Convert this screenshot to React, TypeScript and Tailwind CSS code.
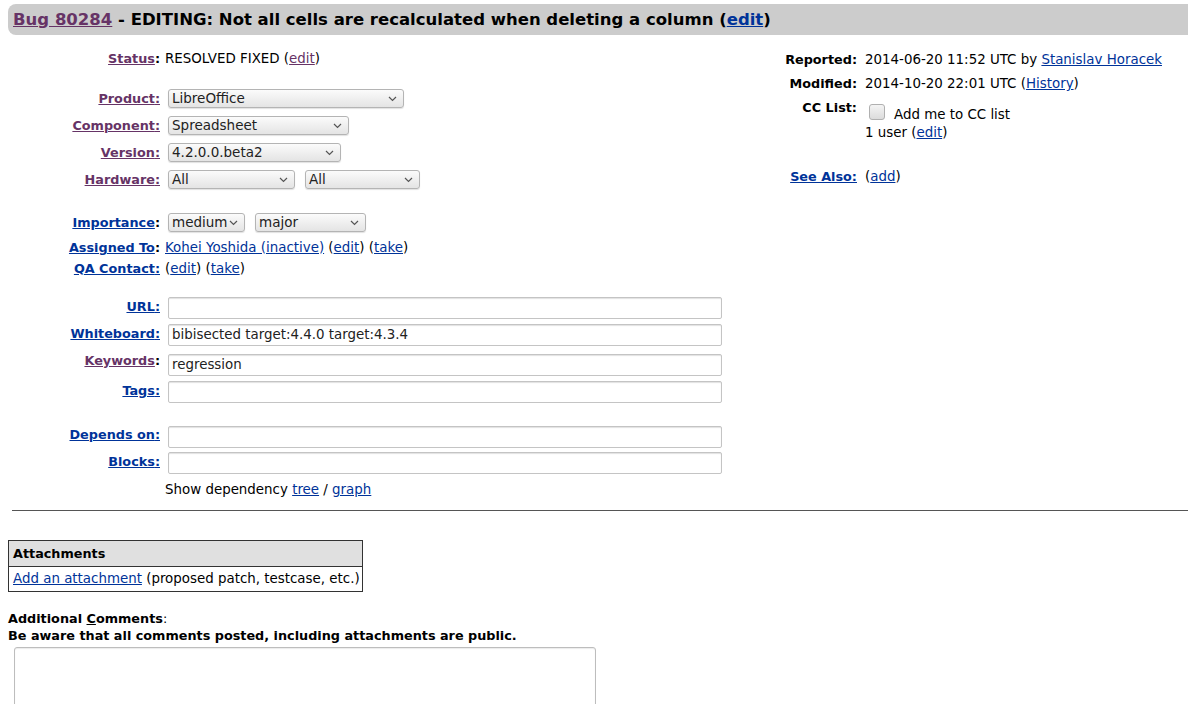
import React from "react";

const BLUE = "text-[#003399]";
const PURPLE = "text-[#663366]";

function Chevron() {
  return (
    <svg width="9" height="6" viewBox="0 0 9 6" className="absolute right-[6px] top-1/2 -translate-y-1/2">
      <path d="M1 1 L4.5 4.5 L8 1" fill="none" stroke="#555" strokeWidth="1.2" />
    </svg>
  );
}

function Select({ width, value, className = "" }: { width: string; value: string; className?: string }) {
  return (
    <div
      className={`relative flex h-[19px] items-center rounded-[3px] border border-[#b4b4b4] bg-gradient-to-b from-[#fbfbfb] to-[#e4e4e4] pl-[3px] text-[13.5px] leading-none text-[#222] shadow-[0_1px_1px_rgba(0,0,0,0.12)] ${width} ${className}`}
    >
      {value}
      <Chevron />
    </div>
  );
}

function TextInput({ value = "", className = "" }: { value?: string; className?: string }) {
  return (
    <div
      className={`ml-[3px] flex h-[22px] w-[554px] items-center rounded-[2px] border border-[#c4c4c4] bg-white pl-[3px] text-[13.4px] text-[#222] shadow-[inset_0_1px_1px_rgba(0,0,0,0.12)] ${className}`}
    >
      {value}
    </div>
  );
}

function Label({ text, color, colonLinked = true }: { text: string; color: string; colonLinked?: boolean }) {
  return (
    <div className="w-[160px] shrink-0 text-right text-[12.8px] font-bold">
      {colonLinked ? (
        <a className={`${color} underline`}>{text}:</a>
      ) : (
        <>
          <a className={`${color} underline`}>{text}</a>:
        </>
      )}
    </div>
  );
}

export default function App() {
  return (
    <div className="min-h-screen overflow-hidden bg-white font-['DejaVu_Sans',Verdana,sans-serif] text-[13.4px] leading-[16px] text-black">
      {/* title bar */}
      <div className="mt-[4px] ml-[8px] -mr-[20px] flex h-[31px] items-center rounded-l-[8px] bg-[#cccccc] pl-[5px] text-[16.5px] font-bold whitespace-nowrap">
        <a className={`${PURPLE} underline`}>Bug 80284</a>
        <span>&nbsp;- EDITING: Not all cells are recalculated when deleting a column (</span>
        <a className={`${BLUE} underline`}>edit</a>
        <span>)</span>
      </div>

      <div className="flex">
        {/* left column */}
        <div className="w-[760px] shrink-0">
          <div className="mt-[16px] flex h-[16px] items-center">
            <Label text="Status" color={PURPLE} colonLinked={false} />
            <div className="pl-[5px]">
              RESOLVED FIXED (<a className={`${PURPLE} underline`}>edit</a>)
            </div>
          </div>

          <div className="mt-[18px] flex h-[27px] items-center">
            <Label text="Product" color={PURPLE} />
            <Select width="w-[236px]" value="LibreOffice" className="ml-[8px]" />
          </div>
          <div className="flex h-[27px] items-center">
            <Label text="Component" color={PURPLE} />
            <Select width="w-[181px]" value="Spreadsheet" className="ml-[8px]" />
          </div>
          <div className="flex h-[27px] items-center">
            <Label text="Version" color={PURPLE} />
            <Select width="w-[173px]" value="4.2.0.0.beta2" className="ml-[8px]" />
          </div>
          <div className="flex h-[27px] items-center">
            <Label text="Hardware" color={PURPLE} />
            <Select width="w-[127px]" value="All" className="ml-[8px]" />
            <Select width="w-[115px]" value="All" className="ml-[10px]" />
          </div>

          <div className="mt-[16px] flex h-[27px] items-center">
            <Label text="Importance" color={BLUE} colonLinked={false} />
            <Select width="w-[77px]" value="medium" className="ml-[8px]" />
            <Select width="w-[111px]" value="major" className="ml-[10px]" />
          </div>
          <div className="mt-[1px] flex h-[21px] items-center">
            <Label text="Assigned To" color={BLUE} colonLinked={false} />
            <div className="pl-[5px]">
              <a className={`${BLUE} underline`}>Kohei Yoshida (inactive)</a> (
              <a className={`${BLUE} underline`}>edit</a>) (<a className={`${BLUE} underline`}>take</a>)
            </div>
          </div>
          <div className="flex h-[21px] items-center">
            <Label text="QA Contact" color={BLUE} />
            <div className="pl-[5px]">
              (<a className={`${BLUE} underline`}>edit</a>) (<a className={`${BLUE} underline`}>take</a>)
            </div>
          </div>

          <div className="mt-[18px] flex h-[27px] items-start">
            <div className="pt-[2px]">
              <Label text="URL" color={BLUE} />
            </div>
            <TextInput className="ml-[8px]" />
          </div>
          <div className="flex h-[27px] items-start">
            <div className="pt-[2px]">
              <Label text="Whiteboard" color={BLUE} />
            </div>
            <TextInput className="ml-[8px]" value="bibisected target:4.4.0 target:4.3.4" />
          </div>
          <div className="flex h-[30px] items-start">
            <div className="pt-[2px]">
              <Label text="Keywords" color={PURPLE} colonLinked={false} />
            </div>
            <TextInput className="mt-[3px] ml-[8px]" value="regression" />
          </div>
          <div className="flex h-[27px] items-start">
            <div className="pt-[2px]">
              <Label text="Tags" color={BLUE} />
            </div>
            <TextInput className="ml-[8px]" />
          </div>

          <div className="mt-[18px] flex h-[26px] items-start">
            <div className="pt-[1px]">
              <Label text="Depends on" color={BLUE} />
            </div>
            <TextInput className="ml-[8px]" />
          </div>
          <div className="flex h-[22px] items-start">
            <div className="pt-[2px]">
              <Label text="Blocks" color={BLUE} />
            </div>
            <TextInput className="ml-[8px]" />
          </div>
          <div className="mt-[8px] flex h-[16px]">
            <div className="w-[160px] shrink-0" />
            <div className="pl-[5px]">
              Show dependency <a className={`${BLUE} underline`}>tree</a> / <a className={`${BLUE} underline`}>graph</a>
            </div>
          </div>
        </div>

        {/* right column */}
        <div className="mt-[13px] flex-1">
          <div className="flex h-[24px] items-center">
            <div className="w-[97px] shrink-0 text-right text-[12.8px] font-bold">Reported:</div>
            <div className="pl-[8px] whitespace-nowrap">
              2014-06-20 11:52 UTC by <a className={`${BLUE} underline`}>Stanislav Horacek</a>
            </div>
          </div>
          <div className="flex h-[24px] items-center">
            <div className="w-[97px] shrink-0 text-right text-[12.8px] font-bold">Modified:</div>
            <div className="pl-[8px] whitespace-nowrap">
              2014-10-20 22:01 UTC (<a className={`${BLUE} underline`}>History</a>)
            </div>
          </div>
          <div className="flex">
            <div className="w-[97px] shrink-0 pt-[4px] text-right text-[12.8px] font-bold">CC List:</div>
            <div className="pl-[8px]">
              <div className="mt-[8px] flex items-start">
                <div className="ml-[4px] h-[16px] w-[16px] rounded-[3px] border border-[#b0b0b0] bg-gradient-to-b from-[#f4f4f4] to-[#dcdcdc]" />
                <div className="mt-[3px] ml-[9px]">Add me to CC list</div>
              </div>
              <div className="mt-[2px]">
                1 user (<a className={`${BLUE} underline`}>edit</a>)
              </div>
            </div>
          </div>
          <div className="mt-[28px] flex h-[16px]">
            <div className="w-[97px] shrink-0 text-right text-[12.8px] font-bold">
              <a className={`${BLUE} underline`}>See Also:</a>
            </div>
            <div className="pl-[8px]">
              (<a className={`${BLUE} underline`}>add</a>)
            </div>
          </div>
        </div>
      </div>

      <div className="mt-[12px] ml-[12px] border-t border-[#555]" />

      <div className="mt-[29px] ml-[8px] w-[355px] border border-[#333]">
        <div className="flex h-[26px] items-center border-b border-[#333] bg-[#e0e0e0] pl-[4px] text-[12.8px] font-bold">Attachments</div>
        <div className="flex h-[24px] items-center pl-[4px]">
          <a className={`${BLUE} underline`}>Add an attachment</a>&nbsp;(proposed patch, testcase, etc.)
        </div>
      </div>

      <div className="mt-[19px] ml-[8px] text-[12.8px] font-bold">
        Additional <span className="underline">C</span>omments<span className="font-normal">:</span>
      </div>
      <div className="mt-[1px] ml-[8px] text-[12.8px] font-bold">Be aware that all comments posted, including attachments are public.</div>
      <div className="mt-[3px] ml-[14px] h-[100px] w-[582px] rounded-[3px] border border-[#bdbdbd] bg-white shadow-[inset_0_1px_1px_rgba(0,0,0,0.08)]" />
    </div>
  );
}
